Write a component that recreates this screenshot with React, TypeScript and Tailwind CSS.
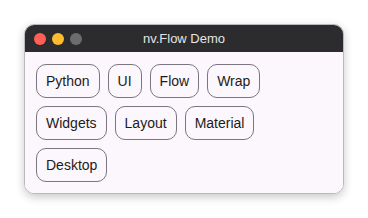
import React from "react";

const chips = ["Python", "UI", "Flow", "Wrap", "Widgets", "Layout", "Material", "Desktop"];

export default function App() {
  return (
    <div className="w-[368px] h-[218px] bg-white p-6" style={{ fontFamily: '"Liberation Sans", Arial, sans-serif' }}>
      <div className="w-[320px] h-[170px] flex flex-col rounded-[10px] overflow-hidden border border-[#b9b9bb] shadow-[0_3px_10px_rgba(0,0,0,0.22)]">
        <div className="h-[27px] shrink-0 bg-[#2c2c2e] relative flex items-center px-[9px] gap-[6px]">
          <span className="w-[12px] h-[12px] rounded-full bg-[#ff5f57]" />
          <span className="w-[12px] h-[12px] rounded-full bg-[#febc2e]" />
          <span className="w-[12px] h-[12px] rounded-full bg-[#6c6c70]" />
          <div className="absolute inset-0 flex items-center justify-center text-[13px] text-[#e4e4e6]">nv.Flow Demo</div>
        </div>
        <div className="flex-1 bg-[#fcf7fd] pl-[11px] pr-[11px] pt-[12px]">
          <div className="flex flex-wrap gap-x-[8px] gap-y-[8px] w-[240px]">
            {chips.map((c) => (
              <div
                key={c}
                className="h-[34px] px-[9px] flex items-center border border-[#7a757f] rounded-[10px] text-[14px] text-[#1d1b20]"
              >
                {c}
              </div>
            ))}
          </div>
        </div>
      </div>
    </div>
  );
}
